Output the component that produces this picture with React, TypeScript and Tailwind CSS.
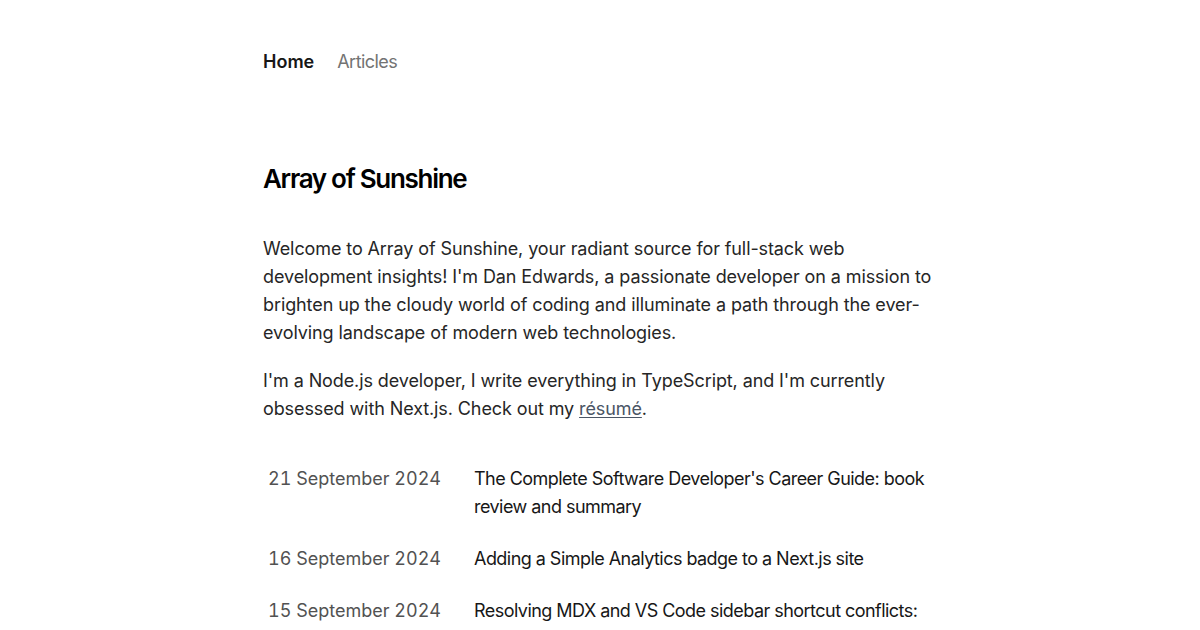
const posts = [
  {
    date: '21 September 2024',
    title: "The Complete Software Developer's Career Guide: book review and summary",
  },
  { date: '16 September 2024', title: 'Adding a Simple Analytics badge to a Next.js site' },
  { date: '15 September 2024', title: 'Resolving MDX and VS Code sidebar shortcut conflicts: a guide' },
];

export default function App() {
  return (
    <div className="min-h-screen bg-white font-['Inter',sans-serif] text-neutral-800 antialiased">
      <div className="mx-auto max-w-[674px] pt-[48px]">
        <nav className="flex gap-[23px] text-lg leading-7">
          <a className="font-semibold text-neutral-900">Home</a>
          <a className="tracking-[-0.03em] text-neutral-500">Articles</a>
        </nav>

        <h1 className="mt-[87px] text-[26px] font-semibold leading-8 tracking-[-0.05em] text-black">
          Array of Sunshine
        </h1>

        <section className="mt-[40px] text-lg leading-7 tracking-[-0.1px]">
          <p className="mb-[20px]">
            Welcome to Array of Sunshine, your radiant source for full-stack web development
            insights! I'm Dan Edwards, a passionate developer on a mission to brighten up the
            cloudy world of coding and illuminate a path through the ever-evolving landscape of
            modern web technologies.
          </p>
          <p>
            I'm a Node.js developer, I write everything in TypeScript, and I'm currently obsessed
            with Next.js. Check out my{' '}
            <a className="text-gray-600 underline decoration-gray-600 underline-offset-2">
              résumé
            </a>
            .
          </p>
        </section>

        <ul className="mt-[42px] flex flex-col gap-6 text-lg leading-7">
          {posts.map((post) => (
            <li key={post.date} className="flex">
              <span className="w-[211px] shrink-0 pl-[5px] tabular-nums text-neutral-600">
                {post.date}
              </span>
              <span className="pr-[6px] tracking-[-0.03em] text-neutral-900">{post.title}</span>
            </li>
          ))}
        </ul>
      </div>
    </div>
  );
}
